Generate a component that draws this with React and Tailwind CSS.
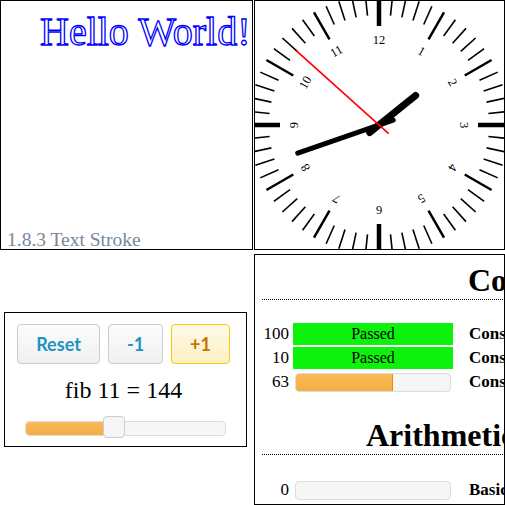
import React from "react";

const SERIF = "font-['Liberation_Serif',serif]";

function Clock() {
  const cx = 124;
  const cy = 124;
  const pt = (deg, r) => {
    const a = (deg * Math.PI) / 180;
    return [cx + Math.sin(a) * r, cy - Math.cos(a) * r];
  };
  const ticks = Array.from({ length: 60 }, (_, i) => {
    const deg = i * 6;
    const major = i % 5 === 0;
    const card = i % 15 === 0;
    const r1 = major ? 99 : 110;
    const [x1, y1] = pt(deg, r1);
    const [x2, y2] = pt(deg, 130);
    return (
      <line
        key={i}
        x1={x1}
        y1={y1}
        x2={x2}
        y2={y2}
        stroke="black"
        strokeWidth={card ? 4.5 : major ? 2.5 : 1.6}
      />
    );
  });
  const nums = Array.from({ length: 12 }, (_, i) => {
    const n = i === 0 ? 12 : i;
    const deg = i * 30;
    const [x, y] = pt(deg, 85);
    return (
      <text
        key={i}
        x={x}
        y={y}
        transform={`rotate(${deg} ${x} ${y})`}
        textAnchor="middle"
        dominantBaseline="central"
        fontSize="12.5"
        fontFamily="Liberation Serif, serif"
        fill="black"
      >
        {n}
      </text>
    );
  });
  const hand = (deg, back, len, w, color, cap) => {
    const [x1, y1] = pt(deg + 180, back);
    const [x2, y2] = pt(deg, len);
    return (
      <line
        x1={x1}
        y1={y1}
        x2={x2}
        y2={y2}
        stroke={color}
        strokeWidth={w}
        strokeLinecap={cap}
      />
    );
  };
  return (
    <svg width="249" height="248" viewBox="0 0 249 248" className="block">
      {ticks}
      {nums}
      {hand(51.2, 12, 47, 7, "black", "round")}
      {hand(250.9, 15, 86, 5, "black", "round")}
      {hand(311.9, 13, 112, 1.6, "red", "butt")}
    </svg>
  );
}

function GreenRow({ n, label }) {
  return (
    <div className="flex items-center h-[24px] whitespace-nowrap">
      <div className="w-[27px] text-right text-[17px] leading-[20px]">{n}</div>
      <div className="ml-[4px] w-[160px] h-[22px] bg-[#0df20d] flex items-center justify-center text-[16px] leading-[20px]">
        Passed
      </div>
      <div className="ml-[16px] font-bold text-[17px] leading-[20px]">{label}</div>
    </div>
  );
}

function ProgressRow({ n, pct, label }) {
  return (
    <div className="flex items-center h-[24px] whitespace-nowrap">
      <div className="w-[27px] text-right text-[17px] leading-[20px]">{n}</div>
      <div className="ml-[4px] w-[160px] flex">
        <div className="mx-[2px] w-[156px] h-[19px] border border-[#dddddd] rounded-[4px] bg-[#f6f6f6] overflow-hidden">
          {pct > 0 && (
            <div
              className="h-full bg-gradient-to-b from-[#f8bb58] to-[#f5ad42] border-r border-[#e78f08]"
              style={{ width: `${pct}%` }}
            />
          )}
        </div>
      </div>
      <div className="ml-[16px] font-bold text-[17px] leading-[20px]">{label}</div>
    </div>
  );
}

export default function App() {
  return (
    <div className={`w-[505px] h-[505px] bg-white overflow-hidden text-black ${SERIF}`}>
      <div className="flex h-[250px]">
        <div className="w-[253px] h-[250px] border border-black flex flex-col justify-between">
          <div className="pl-[39px] pt-[9px] text-[40px] leading-[44px] whitespace-nowrap text-white [-webkit-text-stroke:1.3px_#0000ff]">
            Hello World!
          </div>
          <div className="pl-[6px] text-[19.5px] leading-[19px] text-[#778899] whitespace-nowrap">
            1.8.3 Text Stroke
          </div>
        </div>
        <div className="ml-[1px] w-[251px] h-[250px] border border-black overflow-hidden">
          <Clock />
        </div>
      </div>
      <div className="flex mt-[4px]">
        <div className="w-[254px] pt-[58px] pl-[4px]">
          <div className="w-[243px] h-[135px] border border-black">
            <div className="flex gap-[8px] ml-[12px] mt-[11px] font-['Lato',sans-serif] font-bold text-[18px]">
              <div className="w-[83px] h-[40px] rounded-[4px] border border-[#cccccc] bg-gradient-to-b from-[#fcfcfc] via-[#f6f6f6] to-[#efefef] text-[#1c94c4] flex items-center justify-center">
                Reset
              </div>
              <div className="w-[55px] h-[40px] rounded-[4px] border border-[#cccccc] bg-gradient-to-b from-[#fcfcfc] via-[#f6f6f6] to-[#efefef] text-[#1c94c4] flex items-center justify-center">
                -1
              </div>
              <div className="w-[59px] h-[40px] rounded-[4px] border border-[#fbcb09] bg-gradient-to-b from-[#fefaea] via-[#fdf5d6] to-[#fcefc4] text-[#c77405] flex items-center justify-center">
                +1
              </div>
            </div>
            <div className="mt-[13px] text-center text-[24px] leading-[27px] pr-[4px]">fib 11 = 144</div>
            <div className="ml-[20px] mt-[17px] relative w-[201px] h-[15px] rounded-[4px] border border-[#dddddd] bg-[#f6f6f6]">
              <div className="absolute left-0 top-0 bottom-0 w-[89px] rounded-l-[4px] bg-gradient-to-b from-[#f8bb58] to-[#f5ad42]" />
              <div className="absolute left-[77px] top-[-6px] w-[22px] h-[22px] rounded-[4px] border border-[#cccccc] bg-[#f6f6f6]" />
            </div>
          </div>
        </div>
        <div className="w-[251px] h-[251px] border border-black overflow-hidden">
          <div className="w-[700px] pl-[7px]">
            <div className="mt-[7px] border-b border-dotted border-black">
              <div className="pl-[206px] font-bold text-[32px] leading-[37px] whitespace-nowrap">Constants</div>
            </div>
            <div className="mt-[22px]">
              <GreenRow n="100" label="Constant pi" />
              <GreenRow n="10" label="Constant e" />
              <ProgressRow n="63" pct={63} label="Constant phi" />
            </div>
            <div className="mt-[23px] border-b border-dotted border-black">
              <div className="pl-[104px] font-bold text-[32px] leading-[37px] whitespace-nowrap">Arithmetic</div>
            </div>
            <div className="mt-[23px]">
              <ProgressRow n="0" pct={0} label="Basic arithmetic" />
              <ProgressRow n="0" pct={0} label="Basic powers" />
            </div>
          </div>
        </div>
      </div>
    </div>
  );
}
